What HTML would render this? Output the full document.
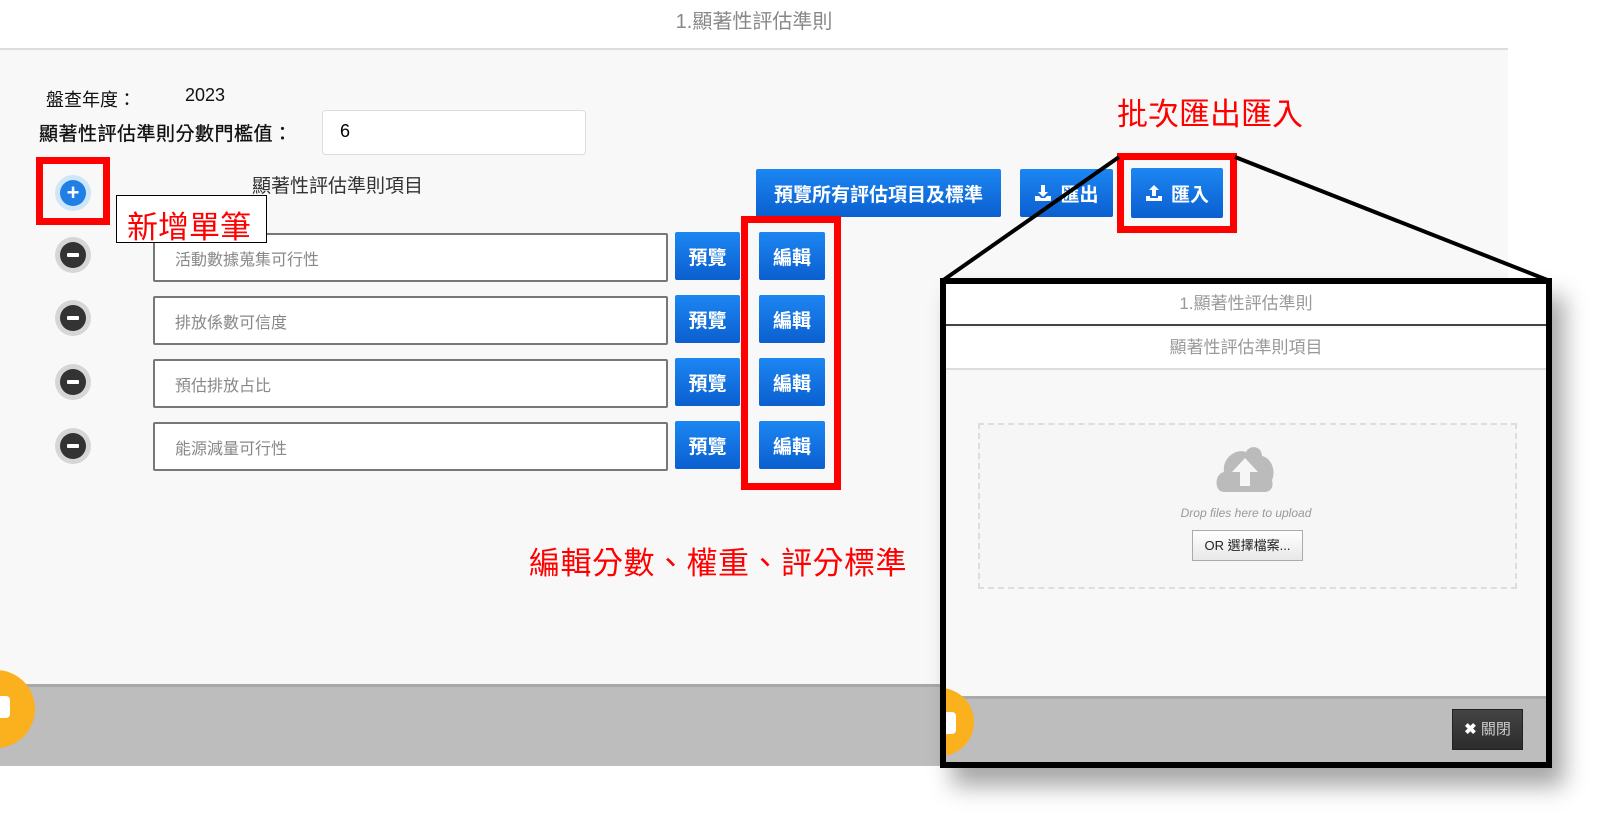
<!DOCTYPE html>
<html><head><meta charset="utf-8"><style>
*{box-sizing:border-box;margin:0;padding:0}
body{width:1600px;height:817px;position:relative;overflow:hidden;background:#fff;font-family:"Liberation Sans","Noto Sans CJK TC",sans-serif}
.a{position:absolute}
.hdr{left:0;top:0;width:1508px;height:50px;background:#fff;border-bottom:2px solid #ddd;text-align:center;font-size:20px;color:#888;line-height:44px}
.main{left:0;top:50px;width:1508px;height:634px;background:#f8f8f8}
.foot{left:0;top:684px;width:1508px;height:82px;background:#bdbdbd;border-top:3px solid #a8a8a8}
.btn{background:linear-gradient(#1c86f2,#0b5fcf);color:#fff;font-weight:bold;font-size:19px;display:flex;align-items:center;justify-content:center;border-radius:2px}
.btn svg{margin-right:8px}
.inp{background:#fff;border:2px solid #777;border-radius:2px;font-size:16px;color:#888;padding-left:20px;display:flex;align-items:center}
.rb{border:7px solid #f00}
.red{color:#f00;font-size:31px}
.minus{width:36px;height:36px;border-radius:50%;background:#d6d6d6;display:flex;align-items:center;justify-content:center}
.minus i{width:26px;height:26px;border-radius:50%;background:#333;position:relative;display:block}
.minus i:after{content:"";position:absolute;left:7px;top:11px;width:12px;height:4px;background:#fff;border-radius:1px}
</style></head><body>
<div class="a hdr">1.顯著性評估準則</div>
<div class="a main"></div>
<div class="a foot"></div>
<div class="a" style="left:-43px;top:670px;width:78px;height:78px;border-radius:50%;background:#fbb01e"></div>
<div class="a" style="left:0;top:696px;width:10px;height:22px;background:#fff;border-radius:0 4px 4px 0"></div>

<div class="a" style="left:46px;top:86px;font-size:18px;color:#111">盤查年度：</div>
<div class="a" style="left:185px;top:85px;font-size:18px;color:#111">2023</div>
<div class="a" style="left:39px;top:119px;font-size:19px;color:#111;letter-spacing:0.5px;-webkit-text-stroke:0.3px #111">顯著性評估準則分數門檻值：</div>
<div class="a" style="left:322px;top:110px;width:264px;height:45px;background:#fff;border:1px solid #ddd;border-radius:4px;font-size:18px;padding:10px 0 0 17px">6</div>

<div class="a rb" style="left:36px;top:157px;width:74px;height:68px"></div>
<div class="a" style="left:55px;top:175px;width:36px;height:36px;border-radius:50%;background:#cfe6f7"></div>
<div class="a" style="left:60px;top:180px;width:26px;height:26px;border-radius:50%;background:#1f7fe6;color:#fff;font-size:22px;font-weight:bold;line-height:25px;text-align:center">+</div>
<div class="a" style="left:252px;top:171px;font-size:19px;color:#333">顯著性評估準則項目</div>

<div class="a btn" style="left:756px;top:169px;width:245px;height:48px">預覽所有評估項目及標準</div>
<div class="a btn" style="left:1020px;top:169px;width:93px;height:48px"><svg width="18" height="18" viewBox="0 0 18 18"><path d="M7 1h4v7h3l-5 5-5-5h3z" fill="#fff"/><path d="M1 12h4l2 2h4l2-2h4v5H1z" fill="#fff"/></svg>匯出</div>
<div class="a btn" style="left:1131px;top:168px;width:92px;height:50px"><svg width="18" height="18" viewBox="0 0 18 18"><path d="M9 1l5 5h-3v6H7V6H4z" fill="#fff"/><path d="M1 12h4v2h8v-2h4v5H1z" fill="#fff"/></svg>匯入</div>
<div class="a rb" style="left:1117px;top:153px;width:120px;height:80px"></div>
<div class="a red" style="left:1117px;top:89px">批次匯出匯入</div>

<div class="a minus" style="left:55px;top:237px"><i></i></div>
<div class="a minus" style="left:55px;top:300px"><i></i></div>
<div class="a minus" style="left:55px;top:364px"><i></i></div>
<div class="a minus" style="left:55px;top:428px"><i></i></div>
<div class="a inp" style="left:153px;top:233px;width:515px;height:49px">活動數據蒐集可行性</div>
<div class="a inp" style="left:153px;top:296px;width:515px;height:49px">排放係數可信度</div>
<div class="a inp" style="left:153px;top:359px;width:515px;height:49px">預估排放占比</div>
<div class="a inp" style="left:153px;top:422px;width:515px;height:49px">能源減量可行性</div>
<div class="a btn" style="left:675px;top:232px;width:65px;height:48px">預覽</div>
<div class="a btn" style="left:675px;top:295px;width:65px;height:48px">預覽</div>
<div class="a btn" style="left:675px;top:358px;width:65px;height:48px">預覽</div>
<div class="a btn" style="left:675px;top:421px;width:65px;height:48px">預覽</div>
<div class="a btn" style="left:759px;top:232px;width:66px;height:48px">編輯</div>
<div class="a btn" style="left:759px;top:295px;width:66px;height:48px">編輯</div>
<div class="a btn" style="left:759px;top:358px;width:66px;height:48px">編輯</div>
<div class="a btn" style="left:759px;top:421px;width:66px;height:48px">編輯</div>
<div class="a rb" style="left:741px;top:216px;width:100px;height:274px"></div>
<div class="a red" style="left:529px;top:538px;letter-spacing:0.5px">編輯分數、權重、評分標準</div>

<div class="a" style="left:116px;top:195px;width:151px;height:48px;background:#fff;border:1px solid #000"></div>
<div class="a red" style="left:127px;top:202px">新增單筆</div>

<svg class="a" style="left:0;top:0" width="1600" height="817"><line x1="942" y1="281" x2="1119" y2="157" stroke="#000" stroke-width="4"/><line x1="1550" y1="281" x2="1235" y2="157" stroke="#000" stroke-width="4"/></svg>

<div class="a" style="left:940px;top:278px;width:612px;height:490px;border:6px solid #000;background:#f8f8f8;box-shadow:12px 18px 22px rgba(0,0,0,.35);overflow:hidden">
 <div class="a" style="left:0;top:0;width:600px;height:42px;background:#fff;border-bottom:2px solid #444;text-align:center;font-size:17px;color:#999;line-height:40px">1.顯著性評估準則</div>
 <div class="a" style="left:0;top:44px;width:600px;height:42px;background:#fff;border-bottom:2px solid #ddd;text-align:center;font-size:17px;color:#999;line-height:40px">顯著性評估準則項目</div>
 <div class="a" style="left:32px;top:139px;width:539px;height:166px;border:2px dashed #ddd;background:#f6f6f6"></div>
 <svg class="a" style="left:268px;top:160px" width="62" height="50" viewBox="0 0 62 50"><path d="M10 48 C0 48 0 30 10 28 C8 14 22 4 32 8 C36 0 48 2 48 12 C58 14 62 28 58 36 C60 44 56 48 50 48 Z" fill="#bbb"/><path d="M31 14 L18 28 H26 V42 H36 V28 H44 Z" fill="#f6f6f6"/></svg>
 <div class="a" style="left:0;top:222px;width:600px;text-align:center;font-size:12px;font-style:italic;color:#999">Drop files here to upload</div>
 <div class="a" style="left:246px;top:246px;width:111px;height:31px;border:1px solid #aaa;background:linear-gradient(#fff,#e8e8e8);font-size:13px;text-align:center;line-height:29px;color:#222">OR 選擇檔案...</div>
 <div class="a" style="left:0;top:412px;width:600px;height:72px;background:#bdbdbd;border-top:3px solid #aaa"></div>
 <div class="a" style="left:-40px;top:404px;width:68px;height:68px;border-radius:50%;background:#fbb01e"></div>
 <div class="a" style="left:0;top:428px;width:10px;height:22px;background:#fff;border-radius:0 4px 4px 0"></div>
 <div class="a" style="left:506px;top:425px;width:71px;height:41px;background:linear-gradient(#444,#2c2c2c);border:1px solid #222;color:#ccc;font-size:15px;line-height:39px;text-align:center"><b style="color:#fff">✖</b> 關閉</div>
</div>
</body></html>
